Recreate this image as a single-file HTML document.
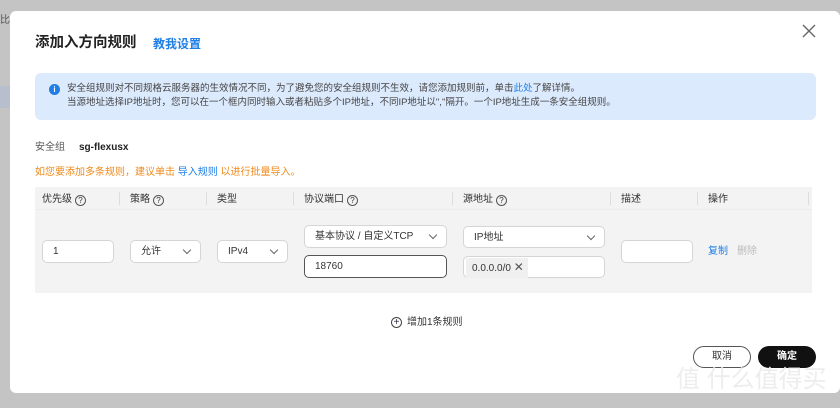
<!DOCTYPE html>
<html><head><meta charset="utf-8"><style>
*{box-sizing:border-box;margin:0;padding:0}
body{width:840px;height:408px;background:#c4c4c4;font-family:"Liberation Sans","Noto Sans CJK SC",sans-serif;position:relative;overflow:hidden;color:#252b3a}
.a{position:absolute;white-space:nowrap;line-height:14px}
.modal{position:absolute;left:10px;top:11px;width:830px;height:382px;background:#fff;border-radius:6px}
.box{position:absolute;background:#fff;border:1px solid #d5d5d5;border-radius:5px;font-size:10px;color:#333;padding-left:10px;line-height:22px}
.chev{position:absolute;right:10px;top:6px;width:6px;height:6px;border-right:1px solid #666;border-bottom:1px solid #666;transform:rotate(45deg)}
.q{display:inline-block;width:11px;height:11px;border:1px solid #555;border-radius:50%;font-size:8px;line-height:9px;text-align:center;vertical-align:-1px;margin-left:3px}
.th{font-size:10px;color:#333;top:193px}
.sep{position:absolute;top:192px;width:1px;height:13px;background:#ddd}
</style></head><body>
<div class="a" style="left:0;top:14px;font-size:10px;color:#555">比</div>
<div class="a" style="left:0;top:86px;width:10px;height:22px;background:#b8bfcc"></div>
<div class="modal"></div>
<div class="a" style="left:35px;top:34px;font-size:14.5px;line-height:18px;font-weight:bold;color:#222">添加入方向规则</div>
<div class="a" style="left:153px;top:36px;font-size:12px;line-height:16px;font-weight:bold;color:#1f7fe6">教我设置</div>
<svg class="a" style="left:802px;top:24px" width="14" height="14"><path d="M1 1L13 13M13 1L1 13" stroke="#666" stroke-width="1.4"/></svg>
<div class="a" style="left:35px;top:73px;width:781px;height:47px;background:#dceafd;border-radius:6px"></div>
<div class="a" style="left:49px;top:84px;width:11px;height:11px;border-radius:50%;background:#1f7fe6;color:#fff;font-size:8px;font-weight:bold;text-align:center;line-height:11px">i</div>
<div class="a" style="left:67px;top:82px;font-size:9.5px;line-height:14px;color:#444">安全组规则对不同规格云服务器的生效情况不同，为了避免您的安全组规则不生效，请您添加规则前，单击<span style="color:#1f7fe6">此处</span>了解详情。<br>当源地址选择IP地址时，您可以在一个框内同时输入或者粘贴多个IP地址，不同IP地址以","隔开。一个IP地址生成一条安全组规则。</div>
<div class="a" style="left:35px;top:141px;font-size:10px;color:#555">安全组</div>
<div class="a" style="left:79px;top:141px;font-size:10px;font-weight:bold;color:#222">sg-flexusx</div>
<div class="a" style="left:35px;top:166px;font-size:10px;color:#f08a1c">如您要添加多条规则，建议单击 <span style="color:#1f7fe6">导入规则</span> 以进行批量导入。</div>
<div class="a" style="left:35px;top:187px;width:777px;height:106px;background:#f3f3f3"></div>
<div class="a" style="left:35px;top:209px;width:777px;height:1px;background:#ececec"></div>
<div class="a th" style="left:42px">优先级<span class="q">?</span></div>
<div class="a th" style="left:130px">策略<span class="q">?</span></div>
<div class="a th" style="left:217px">类型</div>
<div class="a th" style="left:304px">协议端口<span class="q">?</span></div>
<div class="a th" style="left:463px">源地址<span class="q">?</span></div>
<div class="a th" style="left:621px">描述</div>
<div class="a th" style="left:708px">操作</div>
<div class="sep" style="left:119px"></div><div class="sep" style="left:206px"></div><div class="sep" style="left:293px"></div><div class="sep" style="left:452px"></div><div class="sep" style="left:610px"></div><div class="sep" style="left:697px"></div><div class="sep" style="left:808px"></div>
<div class="box" style="left:42px;top:240px;width:72px;height:23px">1</div>
<div class="box" style="left:130px;top:240px;width:71px;height:23px">允许<span class="chev"></span></div>
<div class="box" style="left:217px;top:240px;width:71px;height:23px">IPv4<span class="chev"></span></div>
<div class="box" style="left:304px;top:225px;width:143px;height:23px">基本协议 / 自定义TCP<span class="chev"></span></div>
<div class="box" style="left:304px;top:255px;width:143px;height:23px;border-color:#555">18760</div>
<div class="box" style="left:463px;top:226px;width:142px;height:22px;line-height:21px">IP地址<span class="chev"></span></div>
<div class="box" style="left:463px;top:256px;width:142px;height:22px;padding-left:2px;line-height:18px"><span style="display:inline-block;background:#f0f0f0;padding:0 4px 0 6px;line-height:18px;margin-top:1px;vertical-align:top">0.0.0.0/0 <span style="font-size:12px;color:#555">✕</span></span></div>
<div class="box" style="left:621px;top:240px;width:72px;height:23px"></div>
<div class="a" style="left:708px;top:245px;font-size:10px;color:#1f7fe6">复制</div>
<div class="a" style="left:737px;top:245px;font-size:10px;color:#bbb">删除</div>
<div class="a" style="left:391px;top:317px;width:11px;height:11px;border:1px solid #444;border-radius:50%;font-size:10px;line-height:9px;text-align:center">+</div>
<div class="a" style="left:407px;top:316px;font-size:10px;color:#333">增加1条规则</div>
<div class="a" style="left:693px;top:346px;width:58px;height:22px;border:1px solid #555;border-radius:11px;font-size:10px;text-align:center;line-height:20px;color:#333">取消</div>
<div class="a" style="left:758px;top:346px;width:58px;height:22px;background:#111;border-radius:11px;font-size:10px;text-align:center;line-height:22px;color:#fff;font-weight:bold">确定</div>
<div class="a" style="left:676px;top:365px;font-size:24px;line-height:30px;color:rgba(235,235,235,0.9)">值 什么值得买</div>
</body></html>
